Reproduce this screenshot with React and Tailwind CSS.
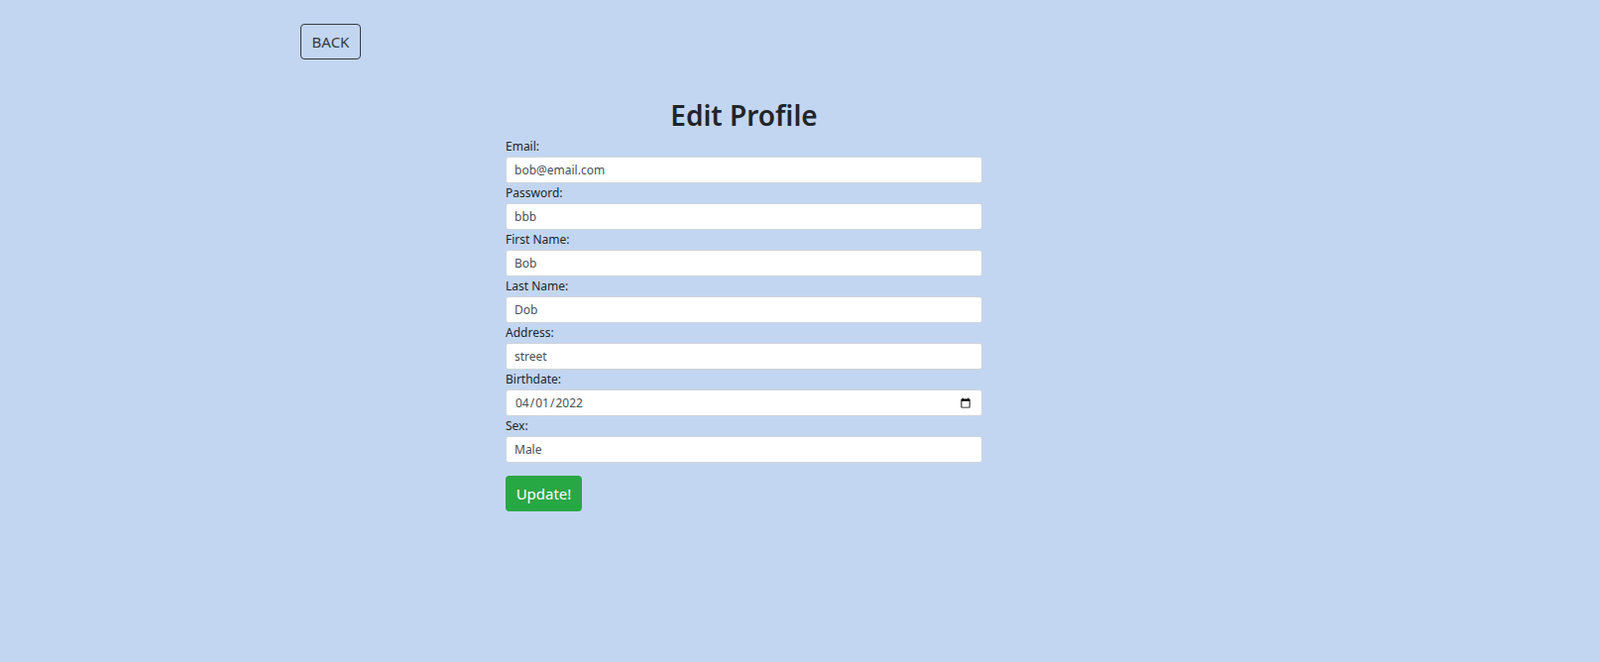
import React from "react";

const fields = [
  { label: "Email:", value: "bob@email.com", type: "text" },
  { label: "Password:", value: "bbb", type: "text" },
  { label: "First Name:", value: "Bob", type: "text" },
  { label: "Last Name:", value: "Dob", type: "text" },
  { label: "Address:", value: "street", type: "text" },
  { label: "Birthdate:", value: "2022-04-01", type: "date" },
  { label: "Sex:", value: "Male", type: "text" },
];

export default function App() {
  return (
    <div className="min-h-screen bg-[#c3d6f1] font-['Noto_Sans',sans-serif] text-[#212529]">
      <div className="pt-6 pl-[303px]">
        <button className="w-[61px] h-[36px] flex items-center justify-center border border-[#343a40] rounded-[4px] text-[15px] leading-[24px] text-[#343a40] font-['Noto_Sans',sans-serif]">
          BACK
        </button>
      </div>
      <div className="ml-[510px] w-[481px]">
        <h2 className="mt-[39px] mb-[5px] text-center text-[28px] leading-[34px] font-semibold text-[#212529]">
          Edit Profile
        </h2>
        <form onSubmit={(e) => e.preventDefault()}>
          {fields.map((f) => (
            <div key={f.label}>
              <label className="block text-[12px] leading-[20px] text-[#212529]">{f.label}</label>
              <input
                type={f.type}
                defaultValue={f.value}
                className="block w-full h-[27px] px-2 bg-white border border-[#ced4da] rounded-[3px] text-[12px] text-[#495057] font-['Noto_Sans',sans-serif] outline-none"
              />
            </div>
          ))}
          <button
            type="submit"
            className="mt-[13px] w-[77px] h-[36px] flex items-center justify-center bg-[#28a745] rounded-[4px] text-[15px] leading-[24px] text-white font-['Noto_Sans',sans-serif]"
          >
            Update!
          </button>
        </form>
      </div>
    </div>
  );
}
